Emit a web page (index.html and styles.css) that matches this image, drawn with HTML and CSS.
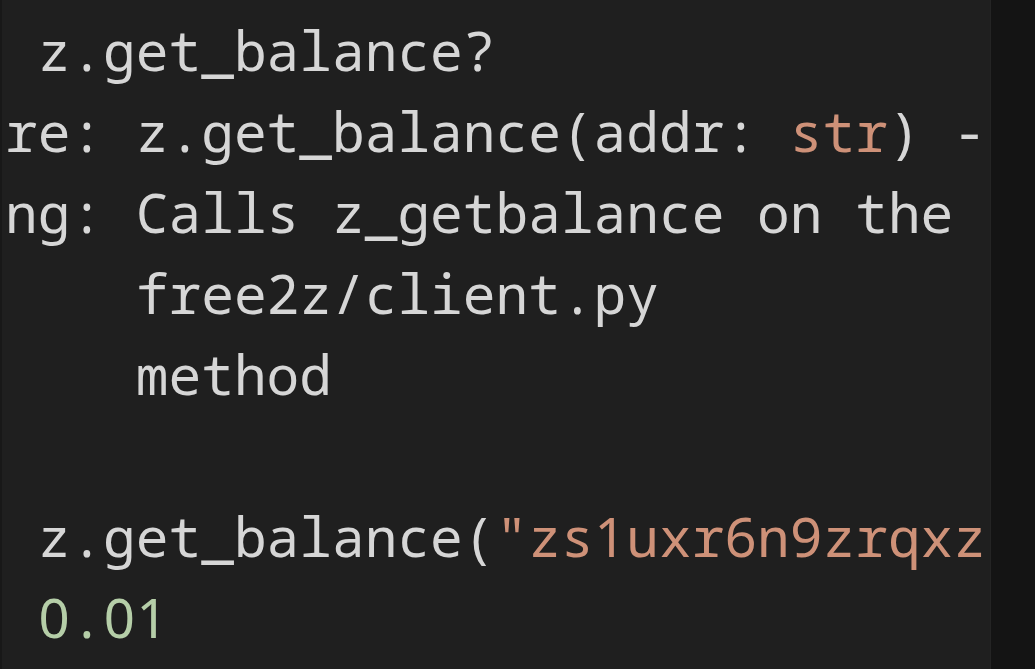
FILE: index.html
```html
<!DOCTYPE html>
<html lang="en">
<head>
<meta charset="utf-8">
<title>IPython help</title>
<link rel="stylesheet" href="styles.css">
</head>
<body>
<div class="screen">
  <div class="editor">
    <div class="line"> z.get_balance?</div>
    <div class="line">re: z.get_balance(addr: <span class="str">str</span>) -</div>
    <div class="line">ng: Calls z_getbalance on the</div>
    <div class="line">    free2z/client.py</div>
    <div class="line">    method</div>
    <div class="line"> </div>
    <div class="line"> z.get_balance(<span class="str">"zs<span class="dg">1</span>uxr6n9zrqxz</span></div>
    <div class="line"> <span class="num"><span class="dg">0</span>.<span class="dg">0</span><span class="dg">1</span></span></div>
  </div>
  <div class="side"></div>
</div>
</body>
</html>
```

FILE: styles.css
```css
html, body {
  margin: 0;
  padding: 0;
  background: #1f1f1f;
}

.screen {
  display: flex;
  width: 1035px;
  height: 669px;
  overflow: hidden;
}

.editor {
  flex: 1;
  overflow: hidden;
  border-left: 2px solid #181818;
  padding-top: 10px;
  padding-left: 3px;
  font-family: "Noto Sans Mono", "Droid Sans Mono", "DejaVu Sans Mono", monospace;
  font-size: 54.5px;
  color: #d6d6d6;
}

.line {
  white-space: pre;
  height: 81px;
  line-height: 81px;
}

.str {
  color: #ce9178;
}

.num {
  color: #b5cea8;
}

.dg {
  display: inline-block;
  width: 32.7px;
  text-align: center;
  font-family: "Noto Sans", sans-serif;
}

.side {
  width: 44px;
  background: #141414;
  border-left: 1px solid #242424;
}
```
